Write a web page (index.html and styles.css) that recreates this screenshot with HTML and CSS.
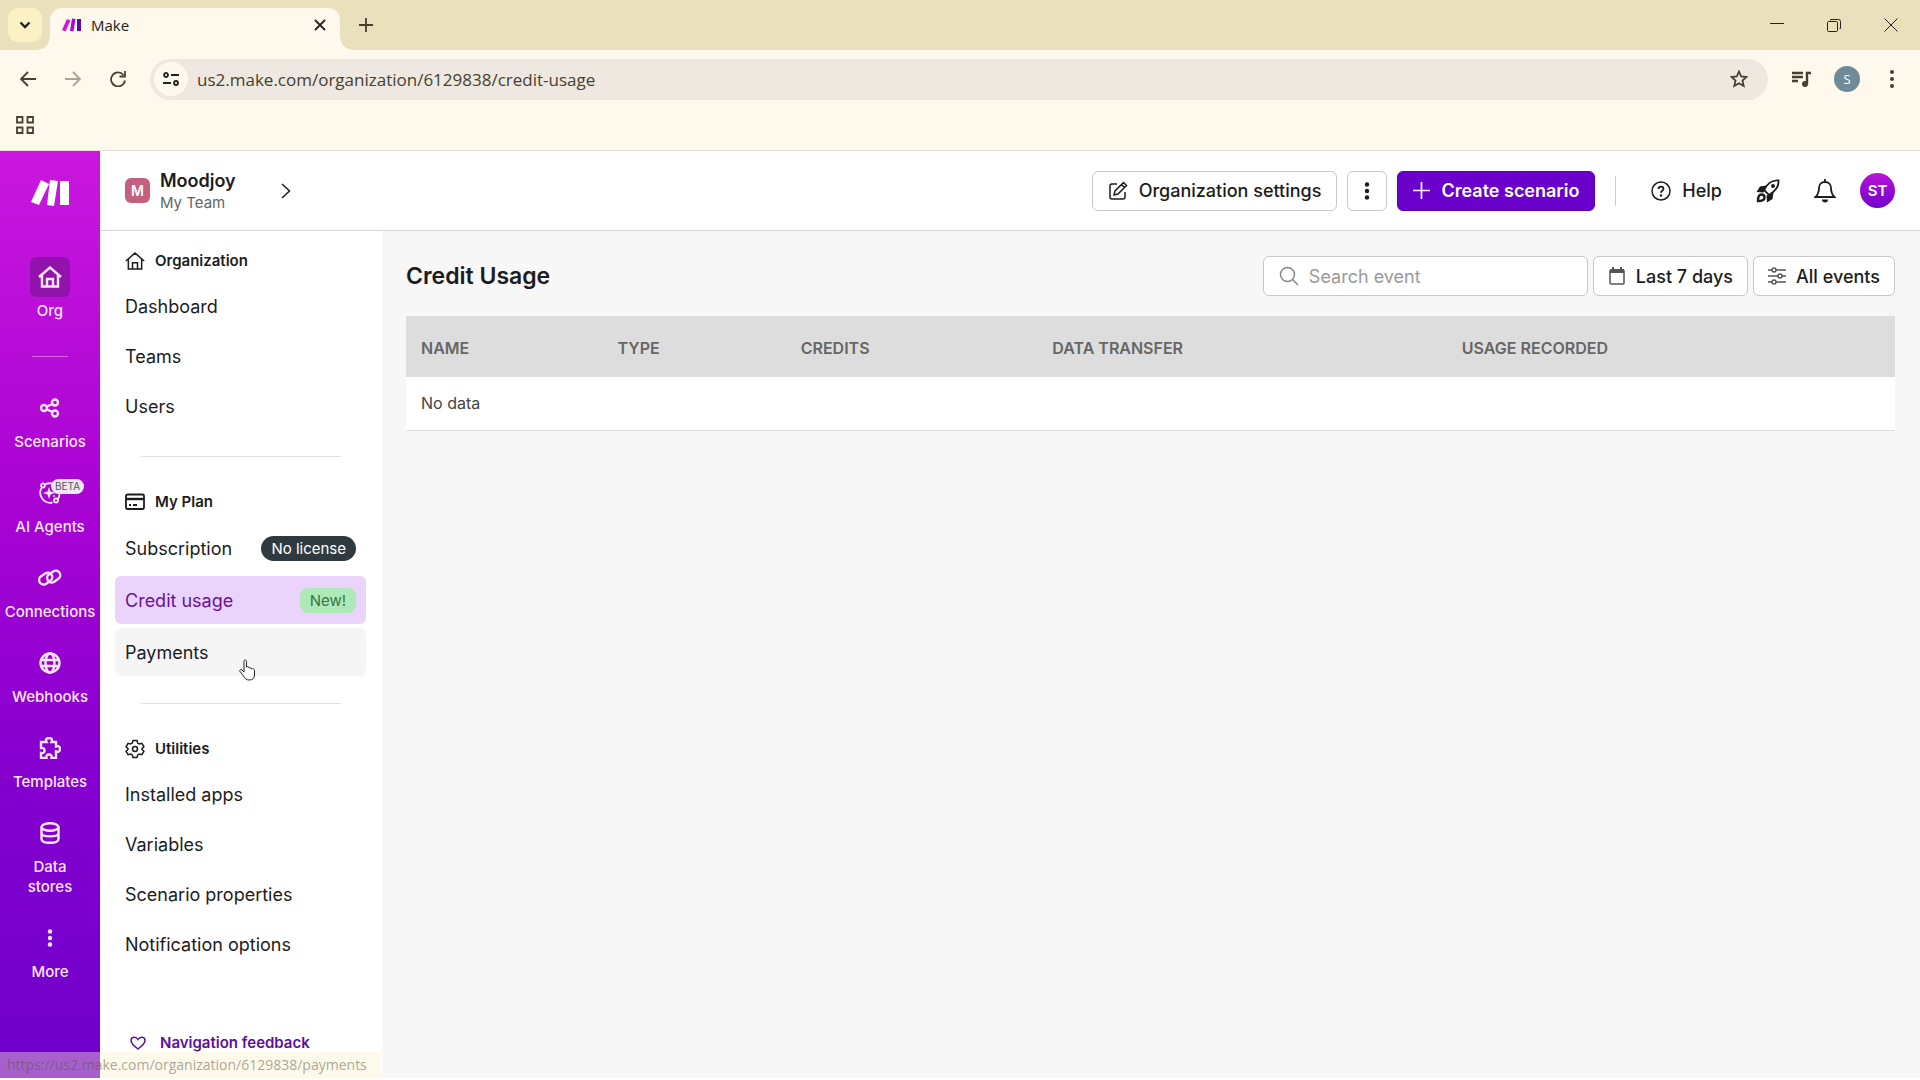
FILE: index.html
```html
<!DOCTYPE html>
<html lang="en">
<head>
	<meta charset="utf-8">
	<title>Make</title>
	<link rel="stylesheet" href="styles.css">
</head>

<body>

	<!-- browser window -->
	<div class="tabstrip">
		<button class="tab-search" aria-label="Search tabs">
			<svg width="12" height="8" viewBox="0 0 12 8"><path d="M1.5 1.5 6 6l4.500-4.500" class="line heavy"/></svg>
		</button>
		<div class="tab">
			<svg width="19" height="14" viewBox="0 0 38 26"><path d="M10 1l7 3L7 26l-7-3z" fill="#d414e0"/><path d="M20 0l7 1-4 25-7-1z" fill="#9b10d8"/><path d="M30 1h8v24h-8z" fill="#5a0bb0"/></svg>
			<span class="tab-title">Make</span>
			<button class="plain" aria-label="Close tab">
				<svg width="12" height="12" viewBox="0 0 12 12"><path d="M1 1l10 10M11 1 1 11" class="line bold"/></svg>
			</button>
		</div>
		<button class="plain new-tab" aria-label="New tab">
			<svg width="14" height="14" viewBox="0 0 14 14"><path d="M7 0v14M0 7h14" class="line bold"/></svg>
		</button>
		<div class="window-buttons">
			<button class="plain" aria-label="Minimize"><svg width="14" height="14" viewBox="0 0 14 14"><path d="M0 5.500h14" class="line thin"/></svg></button>
			<button class="plain" aria-label="Restore"><svg width="14" height="14" viewBox="0 0 14 14"><path d="M3.500 2.500v-1h8a2 2 0 0 1 2 2v7h-1" class="line thin"/><rect x=".5" y="3.500" width="10" height="10" rx="1" class="line thin"/></svg></button>
			<button class="plain" aria-label="Close"><svg width="14" height="14" viewBox="0 0 14 14"><path d="M.5.5l13 13M13.500.5l-13 13" class="line thin"/></svg></button>
		</div>
	</div>

	<div class="toolbar">
		<button class="plain" aria-label="Back"><svg width="16" height="16" viewBox="0 0 16 16"><path d="M16 8H1.500M8 1 1 8l7 7" class="line bold"/></svg></button>
		<button class="plain faded" aria-label="Forward"><svg width="16" height="16" viewBox="0 0 16 16"><path d="M0 8h14.500M8 1l7 7-7 7" class="line bold"/></svg></button>
		<button class="plain" aria-label="Reload"><svg width="16" height="16" viewBox="0 0 16 16"><path d="M13.500 4A7 7 0 1 0 15 9.500M15 0v5.500H9.500" class="line bold"/></svg></button>
		<div class="address">
			<button class="site-info" aria-label="Site information">
				<svg width="16" height="16" viewBox="0 0 16 16"><circle cx="3" cy="4" r="2" class="line bold"/><path d="M8 4h8M0 12h8" class="line bold"/><circle cx="13" cy="12" r="2" class="line bold"/></svg>
			</button>
			<input class="url" type="text" aria-label="Address" value="us2.make.com/organization/6129838/credit-usage">
			<button class="plain" aria-label="Bookmark"><svg width="18" height="18" viewBox="0 0 18 18"><path d="M9 1.500l2.200 5 5.300.5-4 3.600 1.200 5.400L9 13.200 4.300 16l1.200-5.400-4-3.600 5.300-.5z" class="line bold"/></svg></button>
		</div>
		<div class="toolbar-end">
			<button class="plain" aria-label="Media"><svg width="20" height="18" viewBox="0 0 20 18"><path d="M1 3h11M1 7h11M1 11h6M16 14V3h4" class="line heavy"/><circle cx="14" cy="14" r="3" fill="currentColor"/></svg></button>
			<button class="profile" aria-label="Profile">S</button>
			<button class="plain" aria-label="Menu"><svg width="4" height="18" viewBox="0 0 4 18"><circle cx="2" cy="2" r="2"/><circle cx="2" cy="9" r="2"/><circle cx="2" cy="16" r="2"/></svg></button>
		</div>
	</div>

	<div class="bookmarks">
		<button class="plain" aria-label="Apps"><svg width="18" height="18" viewBox="0 0 18 18"><path d="M1 1h5.500v5.500H1zM11.500 1H17v5.500h-5.500zM1 11.500h5.500V17H1zM11.500 11.500H17V17h-5.500z" class="line bold"/></svg></button>
	</div>

	<!-- page -->
	<div class="app">

		<nav class="rail">
			<a class="logo" href="#" aria-label="Make"><svg width="38" height="26" viewBox="0 0 38 26"><path d="M10 0l8 4L8 25l-8-3z"/><path d="M19 0l8 1-4 25-7-1z"/><path d="M29 1h9v24h-9z"/></svg></a>
			<a class="rail-item" href="#">
				<span class="rail-icon current"><svg width="24" height="22" viewBox="0 0 24 22"><path d="M1 11 12 1.500 23 11M4 9v11.500h16V9M9 20v-7h6v7" class="line heavy"/></svg></span>
				Org
			</a>
			<hr class="rail-line">
			<a class="rail-item" href="#">
				<span class="rail-icon"><svg width="20" height="20" viewBox="0 0 20 20"><circle cx="4" cy="10" r="3" class="line heavy"/><circle cx="15" cy="4.500" r="3" class="line heavy"/><circle cx="15" cy="15.500" r="3" class="line heavy"/><path d="M7 8.500l5.500-2.500M7 11.500l5.500 2.500" class="line heavy"/></svg></span>
				Scenarios
			</a>
			<a class="rail-item" href="#">
				<span class="rail-icon"><svg width="22" height="22" viewBox="0 0 22 22"><path d="M13 1.500A10 10 0 0 0 6 2.500M2.500 6a10 10 0 0 0 11 14.500M19 17a10 10 0 0 0 1.500-6" class="line bold"/><circle cx="4" cy="3.500" r="2" class="line bold"/><circle cx="17" cy="18.500" r="2" class="line bold"/><path d="M10 5l1.500 4.500L16 11l-4.500 1.500L10 17l-1.500-4.500L4 11l4.500-1.500z"/><circle cx="15" cy="14" r="1"/></svg><span class="beta">BETA</span></span>
				AI Agents
			</a>
			<a class="rail-item" href="#">
				<span class="rail-icon"><svg width="24" height="20" viewBox="0 0 24 20"><rect x="1" y="6" width="14" height="9" rx="4.500" transform="rotate(-35 8 11)" class="line heavy"/><rect x="9" y="4" width="14" height="9" rx="4.500" transform="rotate(-35 16 9)" class="line heavy"/></svg></span>
				Connections
			</a>
			<a class="rail-item" href="#">
				<span class="rail-icon"><svg width="22" height="22" viewBox="0 0 22 22"><circle cx="11" cy="11" r="9.500" class="line heavy"/><ellipse cx="11" cy="11" rx="4.500" ry="9.500" class="line heavy"/><path d="M2 8h18M2 14h18" class="line heavy"/></svg></span>
				Webhooks
			</a>
			<a class="rail-item" href="#">
				<span class="rail-icon"><svg width="22" height="22" viewBox="0 0 22 22"><path d="M2 5h5.500C6 2 8 1 10 1s4 1 2.500 4H17v4.500c3-1 4 .500 4 2.500s-1 3.500-4 2.500V21h-4.500c.5-3-1-3.500-2.500-3.500S7 18 7.500 21H2v-5c3 .5 3.500-1 3.500-2.500S5 10.500 2 11z" class="line heavy"/></svg></span>
				Templates
			</a>
			<a class="rail-item" href="#">
				<span class="rail-icon"><svg width="20" height="22" viewBox="0 0 20 22"><ellipse cx="10" cy="5" rx="8.500" ry="3.800" class="line heavy"/><path d="M1.500 5v12c0 5 17 5 17 0V5M1.500 11c0 4.500 17 4.500 17 0" class="line heavy"/></svg></span>
				Data<br>stores
			</a>
			<a class="rail-item" href="#">
				<span class="rail-icon"><svg width="6" height="18" viewBox="0 0 6 18"><circle cx="3" cy="2.500" r="2.200"/><circle cx="3" cy="9" r="2.200"/><circle cx="3" cy="15.500" r="2.200"/></svg></span>
				More
			</a>
		</nav>

		<div class="content">
			<header class="topbar">
				<span class="org-badge">M</span>
				<div class="org">
					<div class="org-name">Moodjoy</div>
					<div class="org-team">My Team</div>
				</div>
				<button class="plain org-switch" aria-label="Switch organization"><svg width="10" height="16" viewBox="0 0 10 16"><path d="M1 1l7.500 7L1 15" class="line"/></svg></button>

				<div class="actions">
					<button class="btn"><svg width="20" height="20" viewBox="0 0 20 20"><path d="M9 3H4a2 2 0 0 0-2 2v11a2 2 0 0 0 2 2h11a2 2 0 0 0 2-2v-5M15.500 1.500l3 3L10 13l-4 1 1-4zM13.500 3.500l3 3" class="line"/></svg>Organization settings</button>
					<button class="btn btn-kebab" aria-label="More actions"><svg width="6" height="18" viewBox="0 0 6 18"><circle cx="3" cy="2.500" r="2.200"/><circle cx="3" cy="9" r="2.200"/><circle cx="3" cy="15.500" r="2.200"/></svg></button>
					<button class="btn btn-primary"><svg width="17" height="17" viewBox="0 0 18 18"><path d="M9 0v18M0 9h18" class="line bold"/></svg>Create scenario</button>
				</div>
				<div class="tools">
					<a class="help" href="#"><svg width="20" height="20" viewBox="0 0 20 20"><circle cx="10" cy="10" r="9" class="line"/><path d="M7.500 8c0-3.300 5-3.300 5 0 0 1.800-2.500 1.800-2.500 3.700" class="line bold"/><circle cx="10" cy="14.500" r="1.200"/></svg>Help</a>
					<button class="plain" aria-label="What's new"><svg width="24" height="24" viewBox="0 0 24 24"><path d="M22.500 1.500C16 1 12 3.500 8 11l5 5c7-4 10-8 9.500-14.500z" class="line bold"/><circle cx="17" cy="7" r="2"/><path d="M10.500 6.500 4 7.500.5 13l7 .5zM17.500 13.500l-1 6.500L11 23.500l-.5-7z"/><path d="M2 22c0-4 .500-6.500 3.500-6.500 2 0 3 1 3 3 0 3-3 3.500-6.500 3.500z" class="line heavy"/></svg></button>
					<button class="plain" aria-label="Notifications"><svg width="22" height="24" viewBox="0 0 22 24"><path d="M11 3c-4 0-6 3-6 6 0 5-1.500 7-3.500 9h19c-2-2-3.500-4-3.500-9 0-3-2-6-6-6zM11 0v3" class="line bold"/><path d="M8 20.500h6a3 3 0 0 1-6 0z"/></svg></button>
					<button class="avatar">ST</button>
				</div>
			</header>

			<div class="columns">
				<aside class="subnav">
					<h2><svg width="20" height="20" viewBox="0 0 24 22"><path d="M1 11 12 1.500 23 11M4 9v11.500h16V9M9 20v-7h6v7" class="line bold"/></svg>Organization</h2>
					<ul>
						<li><a href="#">Dashboard</a></li>
						<li><a href="#">Teams</a></li>
						<li><a href="#">Users</a></li>
					</ul>
					<hr>
					<h2><svg width="20" height="20" viewBox="0 0 20 20"><rect x="1" y="2.500" width="18" height="14.500" rx="1.500" class="line bold"/><path d="M1 7h18" class="line heavy"/><path d="M4 13h2M8 13h4" class="line bold"/></svg>My Plan</h2>
					<ul class="plan">
						<li><a href="#">Subscription<span class="pill">No license</span></a></li>
						<li><a href="#" class="selected">Credit usage<span class="pill pill-new">New!</span></a></li>
						<li><a href="#" class="hovered">Payments</a>
							<svg class="pointer" width="18" height="22" viewBox="0 0 18 22"><path d="M6 13V2.500c0-2 2.500-2 2.500 0V8c1.500-.8 2.500 0 2.500 1 1.200-.8 2.500 0 2.500 1 1.500-.8 3 0 3 1.500V16c0 3-2 5-5 5-3.500 0-4.500-1.500-6-4l-3.500-4.500c-1-1.500 1-2.500 2-1.500z" fill="#fff" stroke="#222"/></svg>
						</li>
					</ul>
					<hr>
					<h2><svg width="20" height="20" viewBox="0 0 20 20"><path d="M8 1.500h4l.7 2.600 1.600.9 2.600-.7 2 3.400L17 9.600v.8l1.900 1.900-2 3.400-2.600-.7-1.600.9-.7 2.600H8l-.7-2.600-1.600-.9-2.600.7-2-3.400L3 10.400v-.8L1.100 7.700l2-3.400 2.600.7 1.600-.9z" class="line"/><circle cx="10" cy="10" r="2.500" class="line"/></svg>Utilities</h2>
					<ul>
						<li><a href="#">Installed apps</a></li>
						<li><a href="#">Variables</a></li>
						<li><a href="#">Scenario properties</a></li>
						<li><a href="#">Notification options</a></li>
					</ul>
					<a class="feedback" href="#"><svg width="16" height="14" viewBox="0 0 16 14"><path d="M8 13C4 10 1 7.500 1 4.500 1 .5 6 0 8 3.500 10 0 15 .5 15 4.500c0 3-3 5.500-7 8.500z" class="line"/></svg>Navigation feedback</a>
				</aside>

				<main class="main">
					<div class="main-head">
						<h1>Credit Usage</h1>
						<label class="search">
							<svg width="20" height="20" viewBox="0 0 20 20"><circle cx="8.500" cy="8.500" r="7" class="line"/><path d="M13.500 13.500 19 19" class="line"/></svg>
							<input type="text" placeholder="Search event" aria-label="Search event">
						</label>
						<button class="btn btn-filter"><svg width="18" height="20" viewBox="0 0 18 20"><rect x="2" y="4" width="14" height="14" rx="1" class="line"/><path d="M2 3h14v4H2zM4 1h2v3H4zM12 1h2v3h-2z"/></svg>Last 7 days</button>
						<button class="btn btn-filter"><svg width="18" height="20" viewBox="0 0 18 20"><path d="M0 4h4M8 4h10M0 10h10M14 10h4M0 16h4M8 16h10" class="line"/><circle cx="6" cy="4" r="2" class="line"/><circle cx="12" cy="10" r="2" class="line"/><circle cx="6" cy="16" r="2" class="line"/></svg>All events</button>
					</div>

					<table class="usage">
						<colgroup>
							<col class="col-name"><col class="col-type"><col class="col-credits"><col class="col-data"><col>
						</colgroup>
						<thead>
							<tr><th>NAME</th><th>TYPE</th><th>CREDITS</th><th>DATA TRANSFER</th><th>USAGE RECORDED</th></tr>
						</thead>
						<tbody>
							<tr><td colspan="5">No data</td></tr>
						</tbody>
					</table>
				</main>
			</div>
		</div>

		<div class="status">https://us2.make.com/organization/6129838/payments</div>
	</div>

</body>
</html>
```
FILE: styles.css
```css
* {
	box-sizing: border-box;
}

body {
	margin: 0;
	min-height: 100vh;
	padding-bottom: 2px;
	display: flex;
	flex-direction: column;
	background: #fff;
	color: #1c1c1c;
	font-family: Inter, sans-serif;
	font-size: 18px;
}

a {
	color: inherit;
	text-decoration: none;
}

button, input {
	font: inherit;
	color: inherit;
}

button {
	padding: 0;
	border: 0;
	background: none;
}

svg {
	display: block;
	flex: none;
	fill: currentColor;
}

.line {
	fill: none;
	stroke: currentColor;
	stroke-width: 1.5;
}

.thin {
	stroke-width: 1;
}

.bold {
	stroke-width: 1.8;
}

.heavy {
	stroke-width: 2.4;
}

.plain {
	display: flex;
	align-items: center;
	justify-content: center;
}

/* browser */
.tabstrip, .toolbar, .bookmarks {
	display: flex;
	align-items: center;
	font-family: "Open Sans", "Noto Sans", sans-serif;
	color: #45402f;
}

.tabstrip {
	height: 50px;
	padding-left: 8px;
	background: #eae1bc;
}

.tab-search {
	display: flex;
	align-items: center;
	justify-content: center;
	width: 34px;
	height: 34px;
	border-radius: 10px;
	background: #fbf1c4;
	color: #222;
}

.tab {
	position: relative;
	display: flex;
	align-items: center;
	align-self: flex-end;
	gap: 10px;
	width: 290px;
	height: 42px;
	margin-left: 8px;
	padding: 0 14px 8px 12px;
	border-radius: 12px 12px 0 0;
	background: #fef8ed;
	color: #222;
}

/* flared feet of the active tab */
.tab::before, .tab::after {
	content: "";
	position: absolute;
	bottom: 0;
	width: 12px;
	height: 12px;
}

.tab::before {
	left: -12px;
	background: radial-gradient(circle at 0 0, transparent 11px, #fef8ed 12px);
}

.tab::after {
	right: -12px;
	background: radial-gradient(circle at 100% 0, transparent 11px, #fef8ed 12px);
}

.tab-title {
	flex: 1;
	font-size: 15px;
}

.new-tab {
	margin-left: 19px;
}

.window-buttons {
	display: flex;
	gap: 43px;
	margin-left: auto;
	padding-right: 22px;
	color: #222;
}

.toolbar {
	height: 58px;
	gap: 29px;
	padding: 0 26px 0 20px;
	background: #fef8ed;
}

.faded {
	opacity: .45;
}

.address {
	flex: 1;
	display: flex;
	align-items: center;
	gap: 9px;
	height: 41px;
	margin-left: -5px;
	padding: 0 20px 0 4px;
	border-radius: 21px;
	background: #eee8e1;
}

.site-info {
	display: flex;
	align-items: center;
	justify-content: center;
	width: 34px;
	height: 34px;
	border-radius: 50%;
	background: #fef8ed;
	color: #222;
}

.url {
	flex: 1;
	min-width: 0;
	padding: 0;
	border: 0;
	background: none;
	font-size: 17px;
}

.toolbar-end {
	display: flex;
	align-items: center;
	gap: 26px;
	margin-left: -6px;
}

.profile {
	width: 26px;
	height: 26px;
	margin: 0 4px 0 -3px;
	border-radius: 50%;
	background: #6f8b97;
	color: #fff;
	font-size: 13px;
}

.bookmarks {
	height: 43px;
	padding: 0 16px 8px;
	border-bottom: 1px solid #ecdfd0;
	background: #fef8ed;
}

/* purple rail */
.app {
	position: relative;
	flex: 1;
	display: flex;
}

.rail {
	flex: none;
	display: flex;
	flex-direction: column;
	align-items: center;
	gap: 21px;
	width: 100px;
	padding-top: 29px;
	background: linear-gradient(#ca17de, #a803d3 38%, #8700cf 65%, #6e00cb);
	color: #ffe6ff;
}

.logo {
	margin-bottom: 30px;
	color: #fff;
}

.rail-item {
	font-size: 15px;
	font-weight: 500;
	line-height: 20px;
	text-align: center;
}

.rail-icon {
	position: relative;
	display: flex;
	align-items: center;
	justify-content: center;
	width: 40px;
	height: 40px;
	margin: 0 auto 4px;
	border-radius: 6px;
}

.current {
	background: #9213ab;
}

.rail-line {
	width: 36px;
	margin: 14px 0 10px;
	border: 0;
	border-top: 1px solid #d862e6;
}

.beta {
	position: absolute;
	top: 6px;
	left: 21px;
	padding: 0 4px;
	border-radius: 8px;
	background: #efe6f3;
	color: #555;
	font-size: 10px;
	font-weight: 400;
	line-height: 15px;
}

/* top bar */
.content {
	flex: 1;
	display: flex;
	flex-direction: column;
	min-width: 0;
}

.topbar {
	display: flex;
	align-items: center;
	height: 80px;
	padding: 0 25px;
	border-bottom: 1px solid #d5d5d5;
}

.org-badge {
	width: 25px;
	height: 25px;
	margin-right: 10px;
	border-radius: 6px;
	background: #c75f7f;
	color: #fff;
	font-size: 14px;
	font-weight: 600;
	line-height: 25px;
	text-align: center;
}

.org {
	padding-top: 2px;
}

.org-name {
	font-weight: 600;
	line-height: 22px;
}

.org-team {
	color: #666;
	font-size: 15px;
	line-height: 22px;
}

.org-switch {
	margin-left: 45px;
}

.actions {
	display: flex;
	gap: 10px;
	margin-left: auto;
	padding-right: 20px;
}

.btn {
	display: flex;
	align-items: center;
	gap: 11px;
	height: 40px;
	padding: 0 15px;
	border: 1px solid #c8c8c8;
	border-radius: 6px;
	background: #fff;
	font-weight: 500;
	white-space: nowrap;
}

.btn-kebab {
	justify-content: center;
	width: 40px;
}

.btn-primary {
	border-color: #5c00b5;
	background: #6b00cc;
	color: #fff;
	font-weight: 600;
}

.tools {
	display: flex;
	align-items: center;
	gap: 34px;
	height: 30px;
	padding-left: 35px;
	border-left: 1px solid #ccc;
}

.help {
	display: flex;
	align-items: center;
	gap: 11px;
	font-weight: 500;
}

.avatar {
	width: 35px;
	height: 35px;
	margin-left: -10px;
	border-radius: 50%;
	background: linear-gradient(#b914d6, #7200cc);
	color: #fff;
	font-size: 15px;
	font-weight: 600;
}

/* sub navigation */
.columns {
	flex: 1;
	display: flex;
}

.subnav {
	flex: none;
	display: flex;
	flex-direction: column;
	width: 282px;
	padding: 18px 16px 0 15px;
}

.subnav h2 {
	display: flex;
	align-items: center;
	gap: 10px;
	margin: 0 10px 10px;
	font-size: 15px;
	font-weight: 600;
	line-height: 24px;
}

.subnav ul {
	display: flex;
	flex-direction: column;
	gap: 4px;
	margin: 0;
	padding: 0;
	list-style: none;
}

.subnav li {
	position: relative;
}

.subnav li a {
	display: flex;
	align-items: center;
	justify-content: space-between;
	height: 46px;
	padding: 0 10px;
	border-radius: 6px;
}

.subnav .plan a {
	height: 48px;
}

.subnav hr {
	width: 200px;
	margin: 27px auto 33px;
	border: 0;
	border-top: 1px solid #e2e2e2;
}

.subnav .selected {
	background: #ead4fb;
	color: #6a0f9f;
}

.subnav .hovered {
	background: #f5f5f5;
}

.pill {
	padding: 0 10px;
	border-radius: 13px;
	background: #2f3a40;
	color: #fff;
	font-size: 15px;
	line-height: 25px;
}

.pill-new {
	border-radius: 8px;
	background: #aeeab8;
	color: #357548;
}

.pointer {
	position: absolute;
	top: 31px;
	left: 123px;
}

.feedback {
	display: flex;
	align-items: center;
	gap: 14px;
	margin-top: auto;
	padding: 0 15px 23px;
	color: #5a0f9c;
	font-size: 15px;
	font-weight: 600;
	line-height: 24px;
}

/* credit usage */
.main {
	flex: 1;
	min-width: 0;
	padding: 25px 25px 25px 24px;
	background: #f7f7f7;
}

.main-head {
	display: flex;
	gap: 5px;
	margin-bottom: 20px;
}

h1 {
	margin: 0 auto 0 0;
	font-size: 23px;
	font-weight: 600;
	line-height: 40px;
}

.search {
	display: flex;
	align-items: center;
	gap: 10px;
	width: 325px;
	height: 40px;
	padding: 0 15px;
	border: 1px solid #c8c8c8;
	border-radius: 6px;
	background: #fff;
	color: #888;
}

.search input {
	flex: 1;
	min-width: 0;
	padding: 0;
	border: 0;
	background: none;
}

.search input::placeholder {
	color: #999;
}

.btn-filter {
	gap: 10px;
	padding: 0 14px;
}

.btn-filter svg {
	color: #555;
}

.usage {
	width: 100%;
	table-layout: fixed;
	border-collapse: collapse;
	text-align: left;
}

.col-name {
	width: 13.2%;
}

.col-type {
	width: 12.3%;
}

.col-credits {
	width: 16.9%;
}

.col-data {
	width: 27.5%;
}

.usage th {
	height: 61px;
	padding: 2px 15px 0;
	background: #ddd;
	color: #666;
	font-size: 16px;
	font-weight: 600;
}

.usage td {
	height: 53px;
	padding: 0 15px;
	border-bottom: 1px solid #ddd;
	background: #fff;
	color: #444;
	font-size: 16px;
}

/* link target shown in the corner of the window */
.status {
	position: absolute;
	left: 0;
	bottom: 0;
	width: 381px;
	padding-left: 7px;
	background: rgba(250, 240, 205, .4);
	color: rgba(90, 80, 60, .5);
	font-family: "Open Sans", "Noto Sans", sans-serif;
	font-size: 14px;
	line-height: 26px;
	white-space: nowrap;
}
```
